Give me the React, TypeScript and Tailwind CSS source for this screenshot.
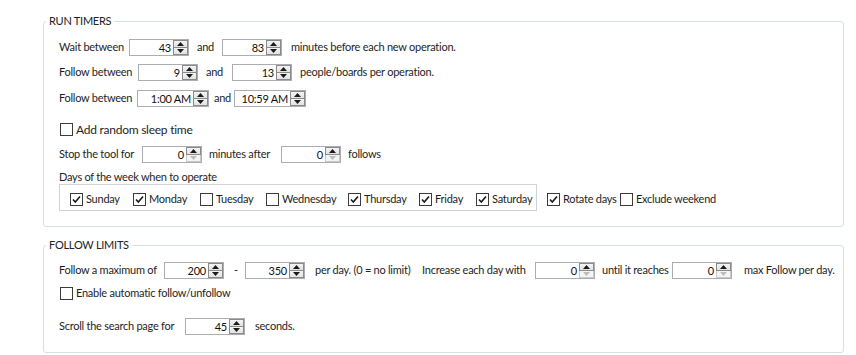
import React from "react";

const font = { fontFamily: 'Lato, "Liberation Sans", sans-serif' };

function Arrow({ up, disabled }: { up: boolean; disabled?: boolean }) {
  return (
    <svg width="7" height="4" viewBox="0 0 7 4" className="block">
      {up ? (
        <polygon points="0,4 7,4 3.5,0" fill={disabled ? "#bcbcbc" : "#1a1a1a"} />
      ) : (
        <polygon points="0,0 7,0 3.5,4" fill={disabled ? "#bcbcbc" : "#1a1a1a"} />
      )}
    </svg>
  );
}

function Spin({
  value,
  className,
  downDisabled,
}: {
  value: string;
  className: string;
  downDisabled?: boolean;
}) {
  return (
    <div className={`flex h-[17px] shrink-0 border border-[#abadb3] bg-white ${className}`}>
      <div className="flex-1 pr-[2px] text-right text-[11px] leading-[15px] text-[#111]">{value}</div>
      <div className="flex w-[15px] flex-col">
        <div className="flex h-[8px] items-center justify-center border border-[#8a8a8a] bg-gradient-to-b from-[#f4f4f4] to-[#e2e2e2]">
          <Arrow up />
        </div>
        <div
          className={`flex h-[7px] items-center justify-center border border-t-0 ${
            downDisabled ? "border-[#c9c9c9] bg-[#f4f4f4]" : "border-[#8a8a8a] bg-gradient-to-b from-[#f4f4f4] to-[#e2e2e2]"
          }`}
        >
          <Arrow up={false} disabled={downDisabled} />
        </div>
      </div>
    </div>
  );
}

function Check({ checked }: { checked?: boolean }) {
  return (
    <div className="flex h-[13px] w-[13px] shrink-0 items-center justify-center border border-[#3c3c3c] bg-white">
      {checked && (
        <svg width="11" height="11" viewBox="0 0 11 11">
          <path d="M2 5.5 L4.3 8 L9 2.5" fill="none" stroke="#1a1a1a" strokeWidth="1.6" />
        </svg>
      )}
    </div>
  );
}

function CheckItem({ label, checked, className }: { label: string; checked?: boolean; className?: string }) {
  return (
    <div className={`flex shrink-0 items-center ${className ?? ""}`}>
      <Check checked={checked} />
      <span className="ml-[3px] whitespace-nowrap">{label}</span>
    </div>
  );
}

export default function App() {
  return (
    <div className="h-[355px] w-[856px] bg-white text-[11px] tracking-[-0.25px] text-[#1e1e1e]" style={font}>
      <div className="w-[844px] pl-[43px] pt-[13px]">
        <fieldset className="min-w-0 rounded-[3px] border border-[#d5dfe5] pb-[15px]">
          <legend className="ml-[2px] px-[3px] text-[11px] leading-[16px] text-[#222]">RUN TIMERS</legend>
          <div className="flex flex-col pl-[15px]">
            <div className="mt-[10px] flex h-[17px] items-center whitespace-nowrap">
              <span className="w-[70px] shrink-0">Wait between</span>
              <Spin value="43" className="w-[60px]" />
              <span className="ml-[8px] w-[25px] shrink-0">and</span>
              <Spin value="83" className="w-[60px]" />
              <span className="ml-[9px]">minutes before each new operation.</span>
            </div>
            <div className="mt-[8px] flex h-[17px] items-center whitespace-nowrap">
              <span className="w-[79px] shrink-0">Follow between</span>
              <Spin value="9" className="w-[60px]" />
              <span className="ml-[8px] w-[26px] shrink-0">and</span>
              <Spin value="13" className="w-[60px]" />
              <span className="ml-[8px]">people/boards per operation.</span>
            </div>
            <div className="mt-[9px] flex h-[17px] items-center whitespace-nowrap">
              <span className="w-[78px] shrink-0">Follow between</span>
              <Spin value="1:00 AM" className="w-[72px]" />
              <span className="ml-[5px] w-[20px] shrink-0">and</span>
              <Spin value="10:59 AM" className="w-[72px]" />
            </div>
            <div className="mt-[14px] flex h-[17px] items-center">
              <CheckItem label="Add random sleep time" className="ml-[1px] text-[12px]" />
            </div>
            <div className="mt-[8px] flex h-[17px] items-center whitespace-nowrap">
              <span className="w-[83px] shrink-0">Stop the tool for</span>
              <Spin value="0" className="w-[60px]" downDisabled />
              <span className="ml-[7px] w-[72px] shrink-0">minutes after</span>
              <Spin value="0" className="w-[60px]" downDisabled />
              <span className="ml-[7px]">follows</span>
            </div>
            <div className="mt-[7px] flex h-[14px] items-center">Days of the week when to operate</div>
            <div className="flex items-center">
              <div className="flex h-[27px] w-[478px] items-center border border-[#cfd3d6] pl-[10px] pt-[3px]">
                <CheckItem label="Sunday" checked className="w-[63px]" />
                <CheckItem label="Monday" checked className="w-[67px]" />
                <CheckItem label="Tuesday" className="w-[66px]" />
                <CheckItem label="Wednesday" className="w-[82px]" />
                <CheckItem label="Thursday" checked className="w-[71px]" />
                <CheckItem label="Friday" className="w-[57px]" checked />
                <CheckItem label="Saturday" checked />
              </div>
              <div className="flex items-center pt-[4px]">
                <CheckItem label="Rotate days" checked className="ml-[10px] w-[73px]" />
                <CheckItem label="Exclude weekend" />
              </div>
            </div>
          </div>
        </fieldset>
        <fieldset className="mt-[10px] min-w-0 rounded-[3px] border border-[#d5dfe5] pb-[17px]">
          <legend className="ml-[2px] px-[3px] text-[11px] leading-[16px] text-[#222]">FOLLOW LIMITS</legend>
          <div className="flex flex-col pl-[15px]">
            <div className="mt-[9px] flex h-[17px] items-center whitespace-nowrap">
              <span className="w-[105px] shrink-0">Follow a maximum of</span>
              <Spin value="200" className="w-[60px]" />
              <span className="ml-[10px] w-[11px] shrink-0">-</span>
              <Spin value="350" className="w-[60px]" />
              <span className="ml-[10px] w-[107px] shrink-0">per day. (0 = no limit)</span>
              <span className="w-[113px] shrink-0">Increase each day with</span>
              <Spin value="0" className="w-[60px]" downDisabled />
              <span className="ml-[7px] w-[70px] shrink-0">until it reaches</span>
              <Spin value="0" className="w-[60px]" downDisabled />
              <span className="ml-[12px]">max Follow per day.</span>
            </div>
            <div className="mt-[6px] flex h-[17px] items-center">
              <CheckItem label="Enable automatic follow/unfollow" className="ml-[1px]" />
            </div>
            <div className="mt-[16px] flex h-[17px] items-center whitespace-nowrap">
              <span className="w-[126px] shrink-0">Scroll the search page for</span>
              <Spin value="45" className="w-[60px]" />
              <span className="ml-[10px]">seconds.</span>
            </div>
          </div>
        </fieldset>
      </div>
    </div>
  );
}
